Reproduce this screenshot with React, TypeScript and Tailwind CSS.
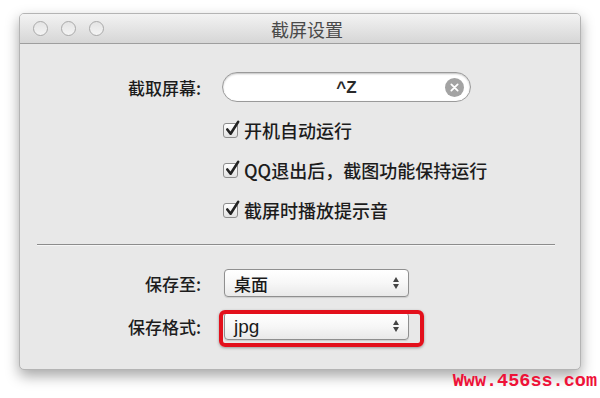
import type { ReactNode } from "react";

const cjk = "font-['Noto_Sans_CJK_SC','Noto_Sans',sans-serif]";

function Light() {
  return (
    <span className="h-[15px] w-[15px] rounded-full border-[1.5px] border-[#a9a9a9] bg-gradient-to-b from-[#e4e4e4] to-[#f4f4f4]" />
  );
}

function Check({ label }: { label: ReactNode }) {
  return (
    <div className="flex h-[20px] items-center gap-[6px]">
      <span className="relative h-[15px] w-[15px] shrink-0 rounded-[3px] border border-[#8d8d8d] bg-gradient-to-b from-[#ffffff] to-[#e2e2e2]">
        <svg
          viewBox="0 0 18 18"
          className="absolute -top-[4px] left-[0px] h-[17px] w-[17px]"
        >
          <path
            d="M3.5 10 L7 14.5 L15 2"
            fill="none"
            stroke="#222"
            strokeWidth="2.8"
            strokeLinecap="round"
            strokeLinejoin="round"
          />
        </svg>
      </span>
      <span className={`${cjk} text-[18px] font-medium leading-none text-[#1c1c1c]`}>
        {label}
      </span>
    </div>
  );
}

function Select({ value, latin }: { value: string; latin?: boolean }) {
  return (
    <div className="flex h-[28px] w-[185px] items-center justify-between rounded-[4px] border border-[#8f8f8f] bg-gradient-to-b from-[#ffffff] via-[#f7f7f7] to-[#e9e9e9] pl-[9px] pr-[9px] shadow-[0_1px_1px_rgba(0,0,0,0.12)]">
      <span
        className={`${
          latin
            ? "font-['Liberation_Sans',sans-serif] text-[19px]"
            : `${cjk} text-[17px] font-medium`
        } leading-none text-[#1a1a1a]`}
      >
        {value}
      </span>
      <span className="flex flex-col items-center gap-[2px]">
        <span className="h-0 w-0 border-x-[3px] border-b-[5px] border-x-transparent border-b-[#444]" />
        <span className="h-0 w-0 border-x-[3px] border-t-[5px] border-x-transparent border-t-[#444]" />
      </span>
    </div>
  );
}

function Label({ children }: { children: ReactNode }) {
  return (
    <div className={`${cjk} w-[181px] text-right text-[17px] font-medium leading-none text-[#1c1c1c]`}>
      {children}
    </div>
  );
}

export default function App() {
  return (
    <div className="relative h-[398px] w-[600px] overflow-hidden bg-white">
      <div className="ml-[19px] mt-[13px] flex h-[357px] w-[562px] flex-col overflow-hidden rounded-[5px] border border-[#b4b4b4] bg-[#e8e8e8] shadow-[0_6px_14px_rgba(0,0,0,0.35)]">
        <div className="relative flex h-[30px] items-center border-b border-[#9e9e9e] bg-gradient-to-b from-[#f3f3f3] to-[#d6d6d6]">
          <div className="flex items-center gap-[13px] pl-[13px]">
            <Light />
            <Light />
            <Light />
          </div>
          <div
            className={`${cjk} absolute inset-x-0 top-[4px] pl-[14px] text-center text-[18px] leading-[22px] text-[#4a4a4a]`}
          >
            截屏设置
          </div>
        </div>

        <div className="flex flex-col">
          <div className="mt-[28px] flex items-center gap-[21px]">
            <Label>截取屏幕:</Label>
            <div className="relative flex h-[30px] w-[249px] items-center justify-center rounded-full border border-[#9a9a9a] bg-white shadow-[inset_0_1px_2px_rgba(0,0,0,0.25)]">
              <span className="font-['Liberation_Sans',sans-serif] text-[17px] font-bold leading-none text-[#2a2a2a]">
                ^Z
              </span>
              <span className="absolute right-[6px] top-[5px] flex h-[19px] w-[19px] items-center justify-center rounded-full bg-[#a3a3a3]">
                <svg viewBox="0 0 10 10" className="h-[9px] w-[9px]">
                  <path d="M1.5 1.5 L8.5 8.5 M8.5 1.5 L1.5 8.5" stroke="#fff" strokeWidth="2" strokeLinecap="round" />
                </svg>
              </span>
            </div>
          </div>

          <div className="ml-[203px] mt-[18px] flex flex-col gap-[20px]">
            <Check label="开机自动运行" />
            <Check label="QQ退出后，截图功能保持运行" />
            <Check label="截屏时播放提示音" />
          </div>

          <div className="ml-[17px] mr-[25px] mt-[24px] h-[2px] border-t border-[#8c8c8c] bg-[#f6f6f6]" />

          <div className="mt-[23px] flex items-center gap-[23px]">
            <Label>保存至:</Label>
            <Select value="桌面" />
          </div>

          <div className="mt-[15px] flex items-center gap-[23px]">
            <Label>保存格式:</Label>
            <div className="relative">
              <Select value="jpg" latin />
              <div className="absolute -bottom-[7px] -left-[5px] -right-[15px] -top-[2px] rounded-[6px] border-[4px] border-[#e3101c] shadow-[0_1px_3px_rgba(0,0,0,0.35)]" />
            </div>
          </div>
        </div>
      </div>

      <div className="absolute right-[3px] top-[371px] font-['Liberation_Mono',monospace] text-[18.5px] font-bold leading-[22px] text-[#ee1238]">
        Www.456ss.com
      </div>
    </div>
  );
}
